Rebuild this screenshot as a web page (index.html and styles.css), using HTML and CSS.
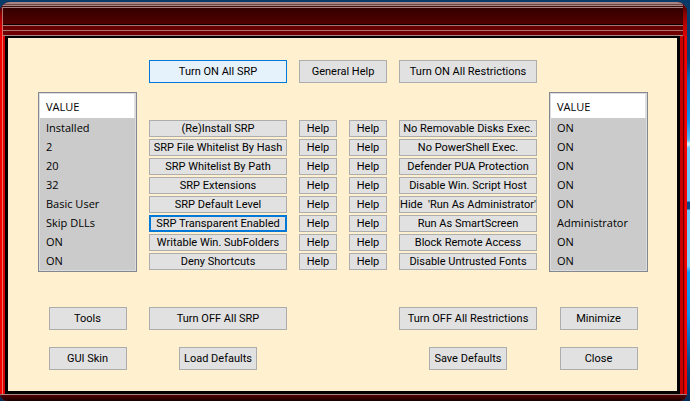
FILE: index.html
```html
<!DOCTYPE html>
<html lang="en">
<head>
<meta charset="utf-8">
<title>SRP settings</title>
<link rel="stylesheet" href="styles.css">
</head>
<body>
<div class="window">
  <header class="titlebar"></header>
  <div class="frame">
    <main class="panel">
      <div class="grid">
        <button class="btn tall on-srp hot">Turn ON All SRP</button>
        <button class="btn tall general">General Help</button>
        <button class="btn tall on-res">Turn ON All Restrictions</button>
      </div>
      <div class="grid settings">
        <table class="values">
          <thead><tr><th>VALUE</th></tr></thead>
          <tbody>
            <tr><td>Installed</td></tr>
            <tr><td>2</td></tr>
            <tr><td>20</td></tr>
            <tr><td>32</td></tr>
            <tr><td>Basic User</td></tr>
            <tr><td>Skip DLLs</td></tr>
            <tr><td>ON</td></tr>
            <tr><td>ON</td></tr>
          </tbody>
        </table>
        <div class="stack">
          <button class="btn">(Re)Install SRP</button>
          <button class="btn">SRP File Whitelist By Hash</button>
          <button class="btn">SRP Whitelist By Path</button>
          <button class="btn">SRP Extensions</button>
          <button class="btn">SRP Default Level</button>
          <button class="btn current">SRP Transparent Enabled</button>
          <button class="btn">Writable Win. SubFolders</button>
          <button class="btn">Deny Shortcuts</button>
        </div>
        <div class="stack">
          <button class="btn">Help</button>
          <button class="btn">Help</button>
          <button class="btn">Help</button>
          <button class="btn">Help</button>
          <button class="btn">Help</button>
          <button class="btn">Help</button>
          <button class="btn">Help</button>
          <button class="btn">Help</button>
        </div>
        <div class="stack">
          <button class="btn">Help</button>
          <button class="btn">Help</button>
          <button class="btn">Help</button>
          <button class="btn">Help</button>
          <button class="btn">Help</button>
          <button class="btn">Help</button>
          <button class="btn">Help</button>
          <button class="btn">Help</button>
        </div>
        <div class="stack">
          <button class="btn">No Removable Disks Exec.</button>
          <button class="btn">No PowerShell Exec.</button>
          <button class="btn">Defender PUA Protection</button>
          <button class="btn">Disable Win. Script Host</button>
          <button class="btn">Hide&nbsp; 'Run As Administrator'</button>
          <button class="btn">Run As SmartScreen</button>
          <button class="btn">Block Remote Access</button>
          <button class="btn">Disable Untrusted Fonts</button>
        </div>
        <table class="values">
          <thead><tr><th>VALUE</th></tr></thead>
          <tbody>
            <tr><td>ON</td></tr>
            <tr><td>ON</td></tr>
            <tr><td>ON</td></tr>
            <tr><td>ON</td></tr>
            <tr><td>ON</td></tr>
            <tr><td>Administrator</td></tr>
            <tr><td>ON</td></tr>
            <tr><td>ON</td></tr>
          </tbody>
        </table>
      </div>
      <div class="grid actions">
        <button class="btn tall small first">Tools</button>
        <button class="btn tall on-srp">Turn OFF All SRP</button>
        <button class="btn tall on-res">Turn OFF All Restrictions</button>
        <button class="btn tall small last">Minimize</button>
        <button class="btn tall small first">GUI Skin</button>
        <button class="btn tall small on-srp">Load Defaults</button>
        <button class="btn tall small on-res">Save Defaults</button>
        <button class="btn tall small last">Close</button>
      </div>
    </main>
  </div>
  <footer class="bottombar"></footer>
</div>
</body>
</html>
```
FILE: styles.css
```css
* {
  box-sizing: border-box;
}

body {
  margin: 0;
  padding: 2px 3px 0 0;
  background: linear-gradient(#063a68 0, #074078 60px, #0a6cc0 80px, #0a8ff0 120px, #58b8f5 140px, #e0f4ff 144px, #6cc4f8 148px, #6cc4f8 201px, #0a4a8c 202px, #0a4a8c 209px, #6cc4f8 210px, #7cccfa 266px, #0a9cf8 272px, #0a90f0 315px, #0a7fdc 325px, #06427c 370px, #042c58 401px);
  font-family: Roboto, "Liberation Sans", sans-serif;
  font-size: 11px;
  color: #000;
}

.window {
  overflow: hidden;
  border-radius: 10px 10px 8px 8px;
  background: #b00000;
}

.titlebar {
  height: 34px;
  background:
    linear-gradient(#400000 0, #c00000 20px, #f00000 34px) left / 2px 100% no-repeat,
    linear-gradient(#a87474, #f07060) 2px 5px / 1px 100% no-repeat,
    linear-gradient(#400000 0, #a00000 16px, #e00000 34px) right / 4px 100% no-repeat,
    linear-gradient(#a88484 0 2px, #6b4646 2px 3px, #a88484 3px 4px, #3c1010 4px 5px, #a88080 5px 6px, #330000 6px, #520000 22px, #0c0000 22px 23px, #a87474 23px 24px, #680000 24px 28px, #a87474 28px 29px, #700000 29px 33px, #a88484 33px 34px);
}

.frame {
  padding: 0 7px 0 5px;
  background:
    linear-gradient(90deg, #f00000 0 2px, #f07060 2px 3px, #d80000 3px 5px) left / 5px 100% no-repeat,
    linear-gradient(90deg, #c80000 0 3px, #700000 3px 4px, #d00000 4px 5px, #f80000 5px 7px) right / 7px 100% no-repeat;
}

.panel {
  display: flex;
  flex-direction: column;
  padding: 22px 29px 21px 30px;
  border: solid #000;
  border-width: 2px 3px 3px;
  background: #fff0d0;
}

.bottombar {
  height: 7px;
  background: linear-gradient(#a88484 0 1px, #500000 1px, #180000 7px);
}

.grid {
  display: grid;
  grid-template-columns: 99fr 138fr 38fr 38fr 138fr 99fr;
  column-gap: 12px;
}

.settings {
  margin-top: 9px;
}

.actions {
  margin-top: 35px;
  row-gap: 17px;
}

.first { grid-column: 1; }
.on-srp { grid-column: 2; }
.general { grid-column: 3 / 5; }
.on-res { grid-column: 5; }
.last { grid-column: 6; }

.stack {
  display: flex;
  flex-direction: column;
  gap: 2px;
  padding-top: 28px;
}

.btn {
  height: 17px;
  padding: 0;
  border: 1px solid #adadad;
  background: #e1e1e1;
  color: #000;
  font: inherit;
  line-height: 15px;
  white-space: nowrap;
}

.tall {
  height: 23px;
}

.small {
  width: 78px;
  justify-self: center;
}

.hot {
  border-color: #0078d7;
  background: #e5f1fb;
}

.current {
  border: 2px solid #0078d7;
  line-height: 13px;
}

.values {
  border: 1px solid #828790;
  border-spacing: 0;
  box-shadow: inset 0 0 0 1px #dcdcdc;
  padding: 1px;
  background: #cbcbcb;
  font-family: "Open Sans", "Noto Sans", sans-serif;
  font-size: 11px;
  line-height: 19px;
}

.values th {
  height: 24px;
  padding: 0 6px;
  border-right: 1px solid #e0e0e0;
  background: #fff;
  font-weight: 400;
  text-align: left;
}

.values td {
  height: 19px;
  padding: 0 6px;
}
```
